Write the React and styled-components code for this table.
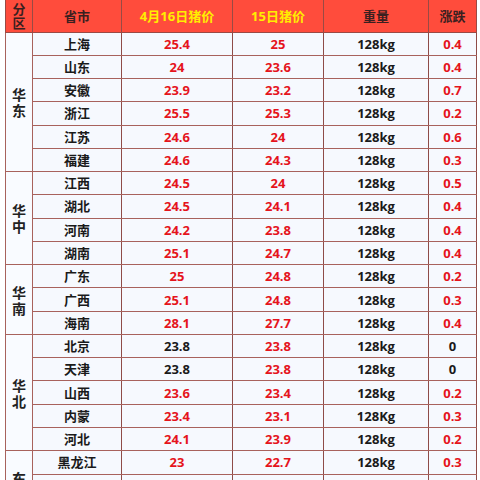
import React from "react";
import styled, { createGlobalStyle } from "styled-components";

const Global = createGlobalStyle`
  html, body { margin: 0; padding: 0; background: #ffffff; }
  body { font-family: "Open Sans", "Noto Sans CJK SC", sans-serif; }
`;

const Wrap = styled.div`
  padding-left: 5px;
  width: 471px;
`;

const Table = styled.table`
  border-collapse: collapse;
  table-layout: fixed;
  width: 471px;
  font-family: "Open Sans", "Noto Sans CJK SC", sans-serif;
  font-weight: 700;
  font-size: 13px;
`;

const HeadRow = styled.tr`
  height: 32px;
  background: #ff4c3c;
`;

const HeadCell = styled.th`
  border: 1px solid #9a4a44;
  border-top: none;
  padding: 0;
  text-align: center;
  vertical-align: middle;
  font-weight: 700;
  font-size: 13px;
  color: ${(p) => (p.$yellow ? "#ffee00" : "#3a2020")};
  line-height: 14px;
`;

const Row = styled.tr`
  height: 23.28px;
  background: #f6f9fe;
`;

const RegionCell = styled.td`
  border: 1px solid #a8625c;
  padding: 0;
  text-align: center;
  vertical-align: middle;
  background: #f9fbff;
  color: #222;
  font-family: "Noto Sans CJK SC", sans-serif;
  font-size: 14px;
  line-height: 16px;
  width: 1em;
`;

const Cell = styled.td`
  border: 1px solid #a8625c;
  border-left-color: #8e4c48;
  border-right-color: #8e4c48;
  padding: 0;
  text-align: center;
  vertical-align: middle;
  color: ${(p) => (p.$red ? "#e5141c" : "#1a1a1a")};
  white-space: nowrap;
  line-height: 16px;
`;

const Stack = styled.span`
  display: inline-block;
  width: 1em;
  word-break: break-all;
`;

const regions = [
  {
    name: "华东",
    rows: [
      ["上海", "25.4", "25", "128kg", "0.4"],
      ["山东", "24", "23.6", "128kg", "0.4"],
      ["安徽", "23.9", "23.2", "128kg", "0.7"],
      ["浙江", "25.5", "25.3", "128kg", "0.2"],
      ["江苏", "24.6", "24", "128kg", "0.6"],
      ["福建", "24.6", "24.3", "128kg", "0.3"],
    ],
  },
  {
    name: "华中",
    rows: [
      ["江西", "24.5", "24", "128kg", "0.5"],
      ["湖北", "24.5", "24.1", "128kg", "0.4"],
      ["河南", "24.2", "23.8", "128kg", "0.4"],
      ["湖南", "25.1", "24.7", "128kg", "0.4"],
    ],
  },
  {
    name: "华南",
    rows: [
      ["广东", "25", "24.8", "128kg", "0.2"],
      ["广西", "25.1", "24.8", "128kg", "0.3"],
      ["海南", "28.1", "27.7", "128kg", "0.4"],
    ],
  },
  {
    name: "华北",
    rows: [
      ["北京", "23.8", "23.8", "128kg", "0", true],
      ["天津", "23.8", "23.8", "128kg", "0", true],
      ["山西", "23.6", "23.4", "128kg", "0.2"],
      ["内蒙", "23.4", "23.1", "128Kg", "0.3"],
      ["河北", "24.1", "23.9", "128kg", "0.2"],
    ],
  },
  {
    name: "东北",
    rows: [
      ["黑龙江", "23", "22.7", "128kg", "0.3"],
      ["吉林", "23.2", "22.9", "128kg", "0.3"],
      ["辽宁", "23.5", "23.2", "128kg", "0.3"],
    ],
  },
];

export default function App() {
  return (
    <Wrap>
      <Global />
      <Table>
        <colgroup>
          <col style={{ width: 27 }} />
          <col style={{ width: 89 }} />
          <col style={{ width: 111 }} />
          <col style={{ width: 91 }} />
          <col style={{ width: 105 }} />
          <col style={{ width: 48 }} />
        </colgroup>
        <thead>
          <HeadRow>
            <HeadCell>
              <Stack>分区</Stack>
            </HeadCell>
            <HeadCell>省市</HeadCell>
            <HeadCell $yellow>4月16日猪价</HeadCell>
            <HeadCell $yellow>15日猪价</HeadCell>
            <HeadCell>重量</HeadCell>
            <HeadCell>涨跌</HeadCell>
          </HeadRow>
        </thead>
        <tbody>
          {regions.map((reg) =>
            reg.rows.map((r, i) => (
              <Row key={reg.name + r[0]}>
                {i === 0 && (
                  <RegionCell rowSpan={reg.rows.length}>
                    <Stack>{reg.name}</Stack>
                  </RegionCell>
                )}
                <Cell>{r[0]}</Cell>
                <Cell $red={!r[5]}>{r[1]}</Cell>
                <Cell $red>{r[2]}</Cell>
                <Cell>{r[3]}</Cell>
                <Cell $red={!r[5]}>{r[4]}</Cell>
              </Row>
            ))
          )}
        </tbody>
      </Table>
    </Wrap>
  );
}
